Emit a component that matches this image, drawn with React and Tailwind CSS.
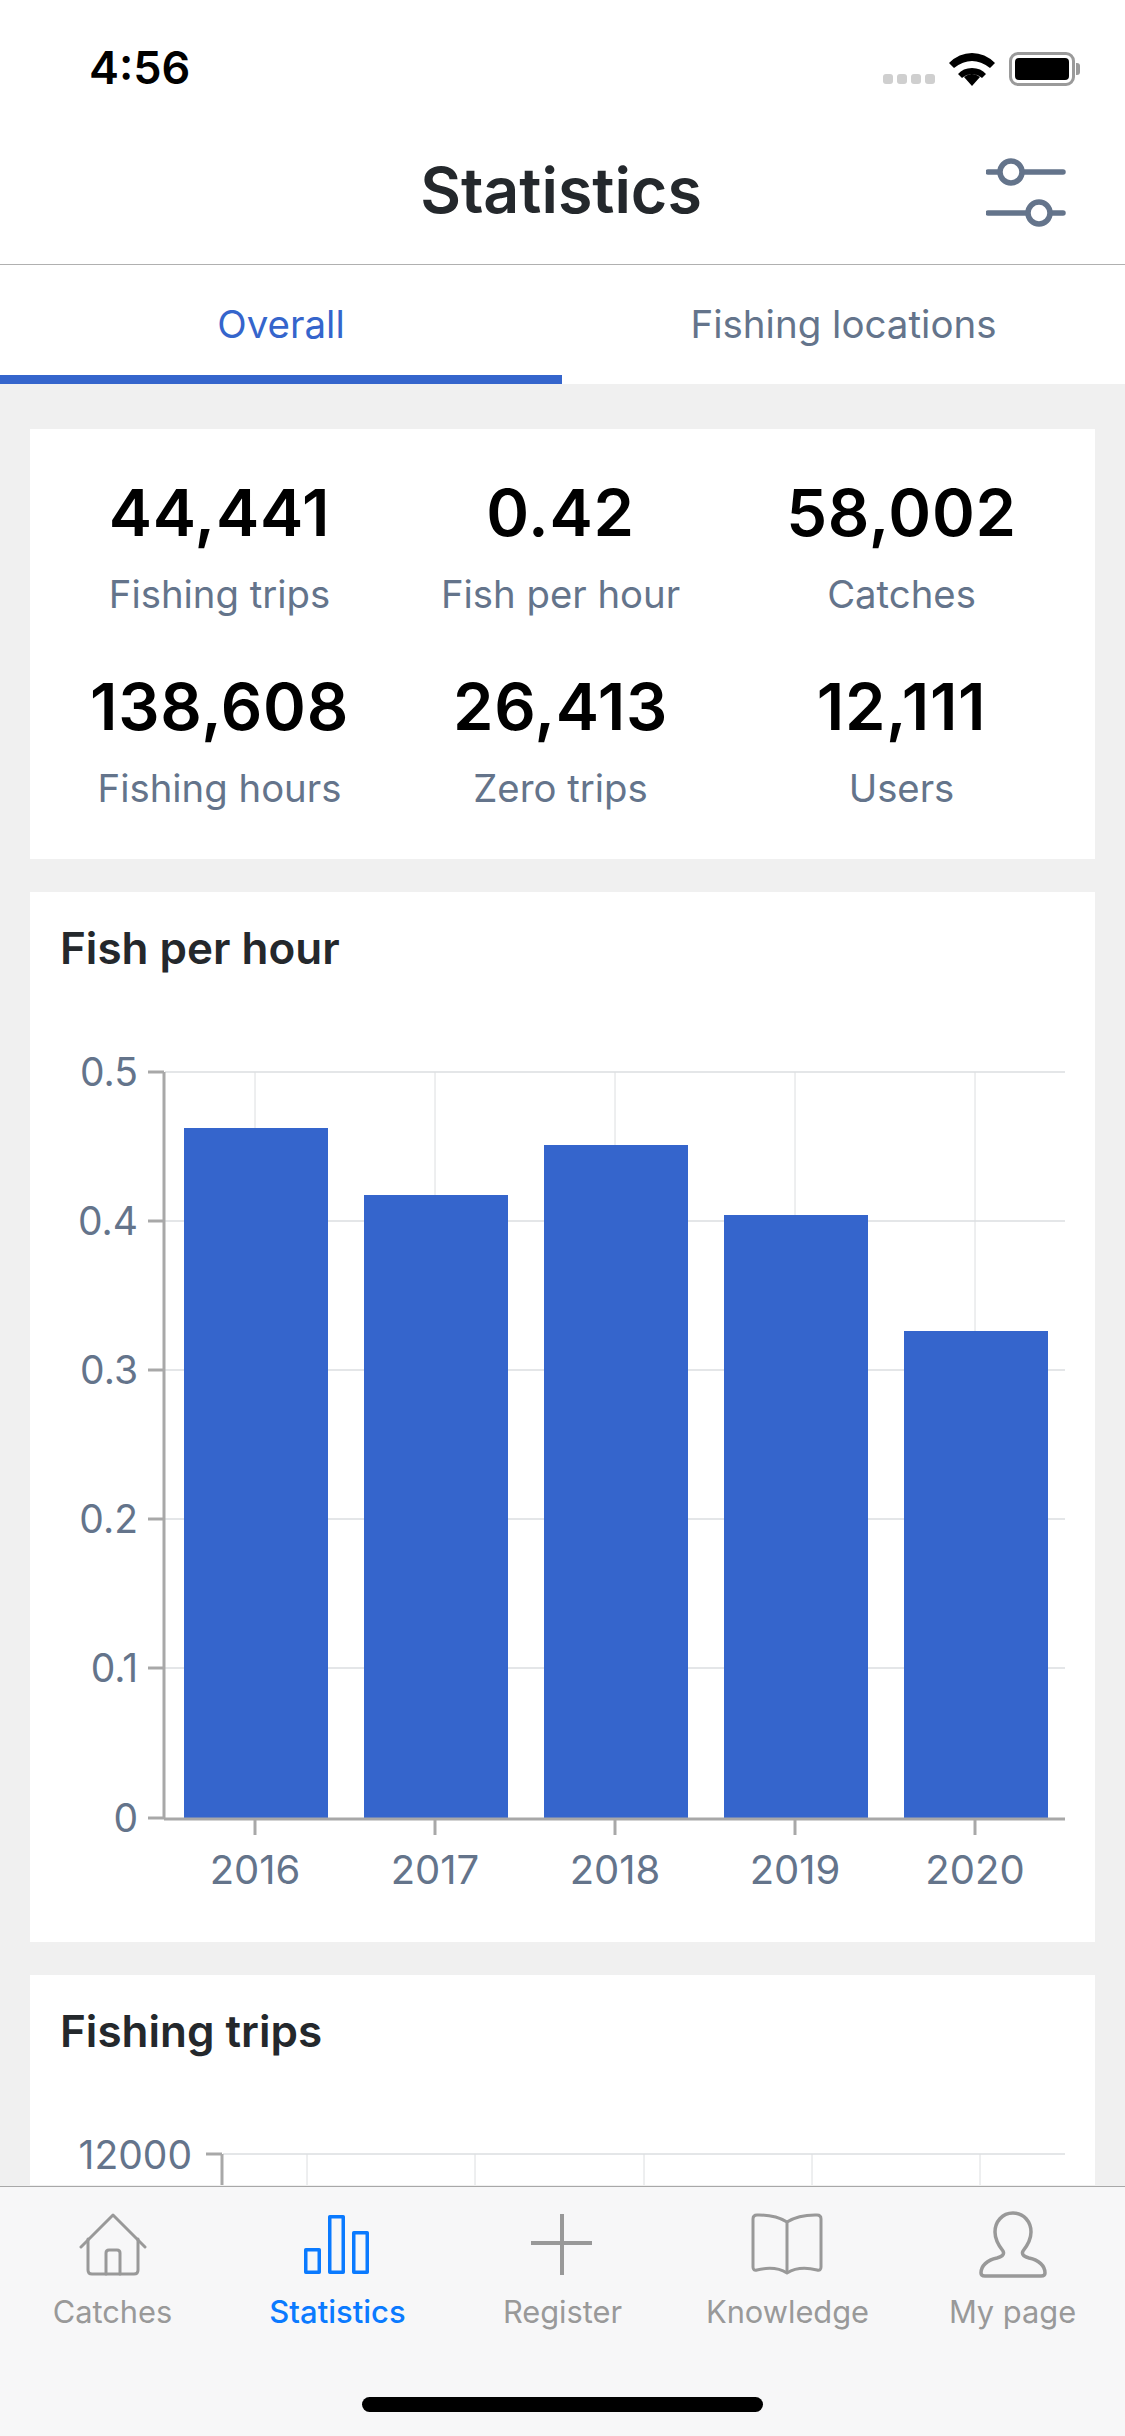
import React from 'react';

const font = { fontFamily: 'Inter, "Liberation Sans", sans-serif' };

const summary = [
  { value: '44,441', label: 'Fishing trips' },
  { value: '0.42', label: 'Fish per hour' },
  { value: '58,002', label: 'Catches' },
  { value: '138,608', label: 'Fishing hours' },
  { value: '26,413', label: 'Zero trips' },
  { value: '12,111', label: 'Users' },
];

const bars = [
  { year: '2016', top: 56 },
  { year: '2017', top: 123 },
  { year: '2018', top: 73 },
  { year: '2019', top: 143 },
  { year: '2020', top: 259 },
];

const FishChart = () => (
  <svg width="1065" height="880" viewBox="0 0 1065 880" className="block">
    {[50, 199, 348, 497, 646].map((y) => (
      <line key={y} x1="135" x2="1035" y1={y} y2={y} stroke="#e4e6e8" strokeWidth="2" />
    ))}
    {[225, 405, 585, 765, 945].map((x) => (
      <line key={x} x1={x} x2={x} y1="50" y2="796" stroke="#dcdee0" strokeWidth="1" />
    ))}
    {bars.map((b, i) => (
      <rect key={b.year} x={154 + i * 180} y={50 + b.top} width="144" height={746 - b.top} fill="#3565cc" />
    ))}
    <line x1="134" x2="134" y1="50" y2="797" stroke="#a8a8a8" strokeWidth="3" />
    <line x1="134" x2="1035" y1="797" y2="797" stroke="#a8a8a8" strokeWidth="3" />
    {[50, 199, 348, 497, 646, 796].map((y) => (
      <line key={y} x1="118" x2="134" y1={y} y2={y} stroke="#a8a8a8" strokeWidth="3" />
    ))}
    {[225, 405, 585, 765, 945].map((x) => (
      <line key={x} x1={x} x2={x} y1="797" y2="813" stroke="#a8a8a8" strokeWidth="3" />
    ))}
    {['0.5', '0.4', '0.3', '0.2', '0.1', '0'].map((t, i) => (
      <text key={t} x="108" y={[50, 199, 348, 497, 646, 796][i] + 14} textAnchor="end" fontSize="39" fill="#64748b" style={font}>
        {t}
      </text>
    ))}
    {bars.map((b, i) => (
      <text key={b.year} x={225 + i * 180} y="862" textAnchor="middle" fontSize="40" fill="#64748b" style={font}>
        {b.year}
      </text>
    ))}
  </svg>
);

const TripsChart = () => (
  <svg width="1065" height="80" viewBox="0 0 1065 80" className="block">
    <line x1="193" x2="1035" y1="49" y2="49" stroke="#e4e6e8" strokeWidth="2" />
    {[277, 445, 614, 782, 950].map((x) => (
      <line key={x} x1={x} x2={x} y1="49" y2="80" stroke="#dcdee0" strokeWidth="1" />
    ))}
    <line x1="192" x2="192" y1="49" y2="80" stroke="#a8a8a8" strokeWidth="3" />
    <line x1="176" x2="192" y1="49" y2="49" stroke="#a8a8a8" strokeWidth="3" />
    <text x="162" y="64" textAnchor="end" fontSize="39" fill="#64748b" style={font}>
      12000
    </text>
  </svg>
);

const HomeIcon = ({ color }) => (
  <svg width="68" height="63" viewBox="0 0 68 63" fill="none" stroke={color} strokeWidth="3" strokeLinejoin="round" strokeLinecap="round" className="mt-[26px]">
    <path d="M2 34 L34 2 L66 34" />
    <path d="M9 26 V57 Q9 61 13 61 H55 Q59 61 59 57 V26" />
    <path d="M27 61 V40 Q27 37 30 37 H38 Q41 37 41 40 V61" />
  </svg>
);

const BarsIcon = ({ color }) => (
  <svg width="66" height="61" viewBox="0 0 66 61" fill="none" stroke={color} strokeWidth="3.5" strokeLinejoin="round" className="mt-[27px] -ml-[1px]">
    <rect x="1.75" y="35.75" width="13.5" height="22.5" />
    <rect x="25.75" y="2.75" width="13.5" height="55.5" />
    <rect x="49.75" y="18.75" width="13.5" height="39.5" />
  </svg>
);

const PlusIcon = ({ color }) => (
  <svg width="62" height="62" viewBox="0 0 62 62" fill={color} className="mt-[27px] -ml-[1px]">
    <rect x="29" y="0" width="4" height="61" />
    <rect x="0" y="27" width="61" height="4" />
  </svg>
);

const BookIcon = ({ color }) => (
  <svg width="72" height="63" viewBox="0 0 72 63" fill="none" stroke={color} strokeWidth="3" strokeLinejoin="round" className="mt-[26px] -ml-[1px]">
    <path d="M36 9 C28 4 20 2 8 2 H6 Q2 2 2 6 V54 Q2 58 6 57 C18 54 28 55 36 60 C44 55 54 54 66 57 Q70 58 70 54 V6 Q70 2 66 2 H64 C52 2 44 4 36 9 Z" />
    <path d="M36 9 V60" />
  </svg>
);

const PersonIcon = ({ color }) => (
  <svg width="68" height="67" viewBox="0 0 68 67" fill="none" stroke={color} strokeWidth="3.5" strokeLinejoin="round" className="mt-[24px]">
    <path d="M34 2 C23 2 16 11 16 21 C16 29 20 35 24 40 C26 44 22 46 18 47 C8 49 2 55 2 62 Q2 65 6 65 H62 Q66 65 66 62 C66 55 60 49 50 47 C46 46 42 44 44 40 C48 35 52 29 52 21 C52 11 45 2 34 2 Z" />
  </svg>
);

const tabs = [
  { label: 'Catches', Icon: HomeIcon },
  { label: 'Statistics', Icon: BarsIcon, active: true },
  { label: 'Register', Icon: PlusIcon },
  { label: 'Knowledge', Icon: BookIcon },
  { label: 'My page', Icon: PersonIcon },
];

const App = () => {
  return (
    <div className="w-[1125px] h-[2436px] flex flex-col overflow-hidden bg-[#f0f0f0]" style={font}>
      {/* Status bar and title */}
      <div className="h-[265px] shrink-0 bg-white border-b border-[#b0b0b0] flex flex-col">
        <div className="h-[132px] flex items-start justify-between pl-[89px] pr-[45px] pt-[44px]">
          <span className="text-[45px] leading-[48px] font-semibold text-black">4:56</span>
          <div className="flex items-end gap-[14px] pt-[8px]">
            <div className="flex gap-[4px] pb-[2px]">
              <span className="w-[10px] h-[10px] rounded-[3px] bg-[#cfcfcf]" />
              <span className="w-[10px] h-[10px] rounded-[3px] bg-[#cfcfcf]" />
              <span className="w-[10px] h-[10px] rounded-[3px] bg-[#cfcfcf]" />
              <span className="w-[10px] h-[10px] rounded-[3px] bg-[#cfcfcf]" />
            </div>
            <svg width="46" height="33" viewBox="0 0 46 33">
              <path d="M23 33 L15 24 Q23 18 31 24 Z M23 15 Q32 15 37 21 L33 25 Q23 17 13 25 L9 21 Q14 15 23 15 Z M23 0 Q36 0 46 10 L41 15 Q23 1 5 15 L0 10 Q10 0 23 0 Z" fill="#000" />
            </svg>
            <div className="flex items-center">
              <div className="w-[66px] h-[34px] rounded-[9px] border-[3px] border-[#9a9a9a] p-[3px]">
                <div className="w-full h-full rounded-[4px] bg-black" />
              </div>
              <span className="w-[4px] h-[12px] rounded-r-[3px] bg-[#9a9a9a] ml-[1px]" />
            </div>
          </div>
        </div>
        <div className="flex-1 relative flex items-center justify-center pb-[16px]">
          <span className="text-[62.7px] leading-[72px] font-semibold text-[#24282c] -ml-[3px]">Statistics</span>
          <svg className="absolute left-[986px] top-[25px]" width="80" height="72" viewBox="0 0 80 72" fill="none" stroke="#64748b" strokeWidth="5.5" strokeLinecap="round">
            <path d="M2 15 H12 M38 15 H77 M2 56 H40 M66 56 H77" />
            <circle cx="25" cy="15" r="11" />
            <circle cx="53" cy="56" r="11" />
          </svg>
        </div>
      </div>

      {/* Top tabs */}
      <div className="h-[119px] shrink-0 bg-white flex">
        <div className="w-[562px] flex items-center justify-center border-b-[9px] border-[#3565cc] pt-[9px] text-[38.5px] text-[#3565cc]">
          Overall
        </div>
        <div className="flex-1 flex items-center justify-center text-[38.5px] text-[#64748b]">
          Fishing locations
        </div>
      </div>

      {/* Scroll content */}
      <div className="flex-1 min-h-0 overflow-hidden px-[30px] pt-[45px] flex flex-col gap-[33px]">
        <div className="h-[430px] shrink-0 bg-white grid grid-cols-3 content-start gap-y-[52px] pl-[19px] pr-[23px] pt-[46px]">
          {summary.map((s) => (
            <div key={s.label} className="flex flex-col items-center">
              <span className="text-[65px] leading-[76px] tracking-[0.7px] font-semibold text-black">{s.value}</span>
              <span className="text-[38.3px] leading-[46px] mt-[20px] text-[#64748b]">{s.label}</span>
            </div>
          ))}
        </div>

        <div className="h-[1050px] shrink-0 bg-white">
          <div className="px-[30px] pt-[30px] h-[130px] text-[44px] leading-[52px] font-semibold text-[#24282c]">Fish per hour</div>
          <FishChart />
        </div>

        <div className="shrink-0 bg-white">
          <div className="px-[30px] pt-[30px] h-[130px] text-[44px] leading-[52px] font-semibold text-[#24282c]">Fishing trips</div>
          <TripsChart />
        </div>
      </div>

      {/* Bottom nav */}
      <div className="h-[250px] shrink-0 bg-[#f7f7f8] border-t border-[#a8a8a8] relative">
        <div className="flex">
          {tabs.map(({ label, Icon, active }) => {
            const color = active ? '#0a7aff' : '#999999';
            return (
              <div key={label} className="w-[225px] flex flex-col items-center">
                <div className="h-[100px] flex items-start justify-center">
                  <Icon color={color} />
                </div>
                <span className={active ? 'text-[31px] leading-[36px] mt-[7px] font-medium text-[#0a7aff]' : 'text-[30.8px] leading-[36px] mt-[7px] text-[#999999]'}>
                  {label}
                </span>
              </div>
            );
          })}
        </div>
        <div className="absolute left-[362px] top-[210px] w-[401px] h-[15px] rounded-full bg-black" />
      </div>
    </div>
  );
};

export default App;
